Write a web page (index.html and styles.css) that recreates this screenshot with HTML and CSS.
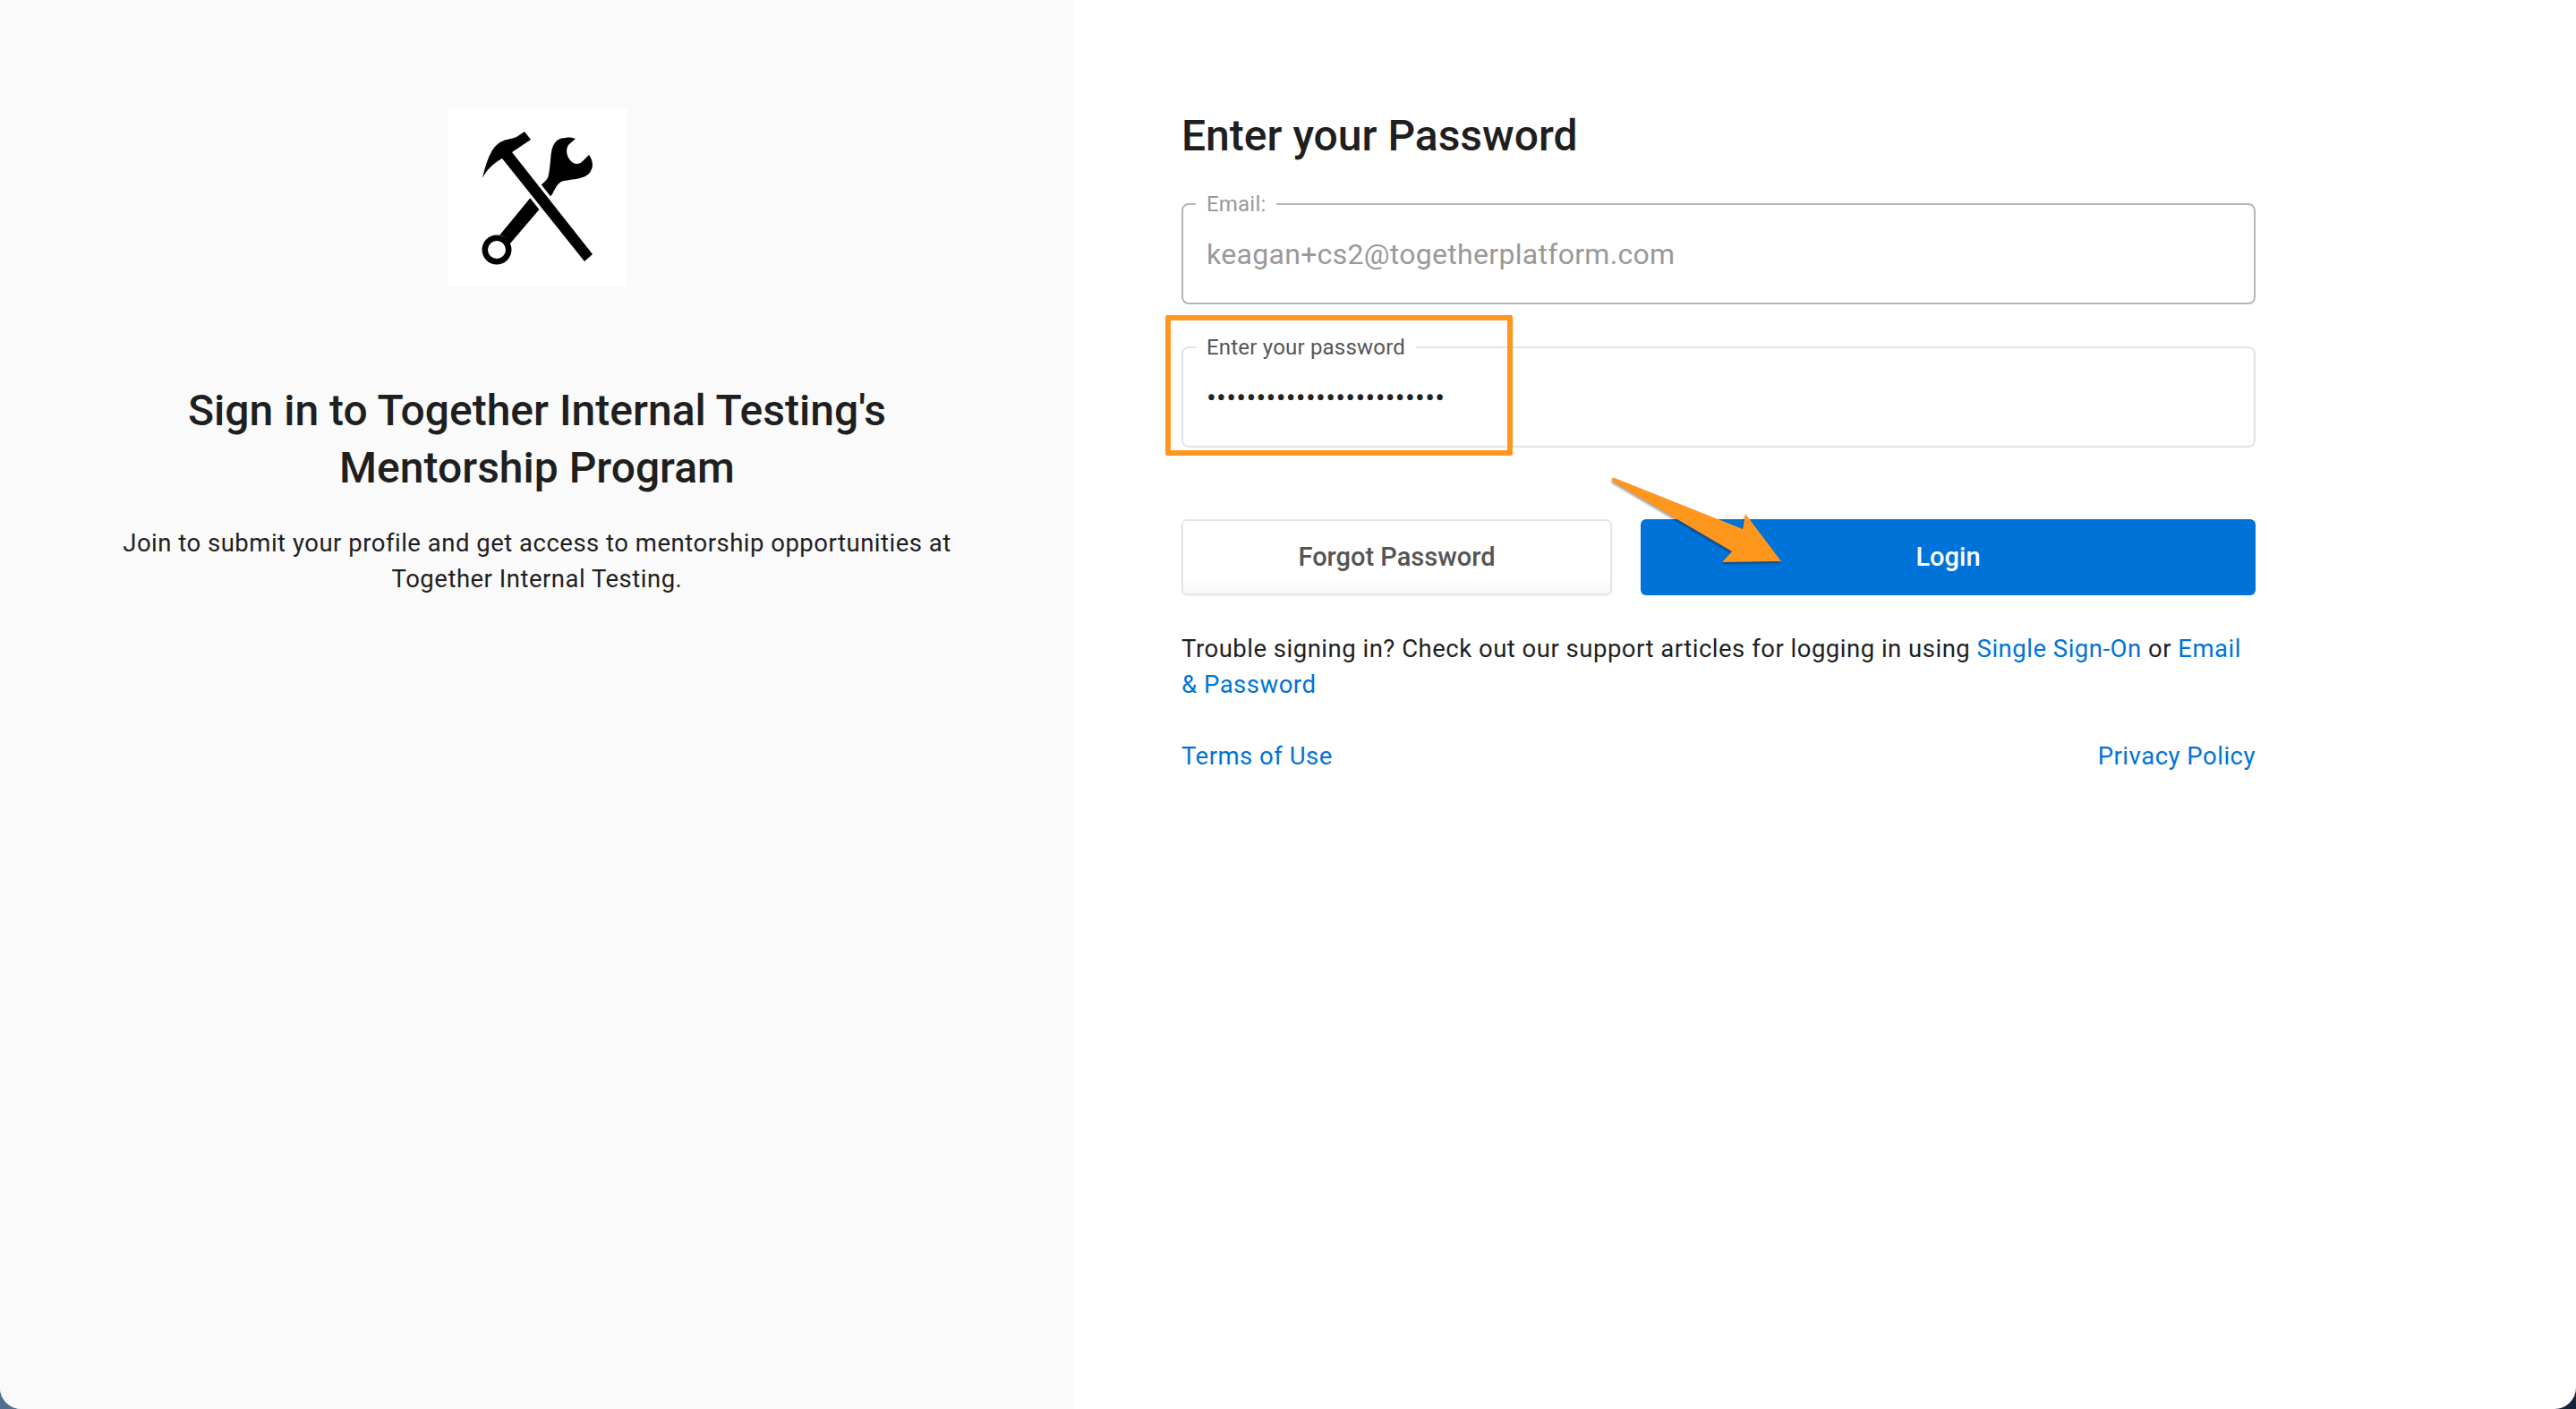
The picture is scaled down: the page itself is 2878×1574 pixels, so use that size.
FILE: index.html
```html
<!DOCTYPE html>
<html lang="en">
<head>
<meta charset="utf-8">
<title>Sign in</title>
<link rel="stylesheet" href="styles.css">
</head>
<body>
<div class="window">
  <aside class="intro">
    <div class="logo">
      <svg viewBox="0 0 200 200" width="200" height="200" aria-hidden="true">
        <path fill-rule="evenodd" d="M55 142.500A16.500 16.500 0 1 0 55 175.500A16.500 16.500 0 1 0 55 142.500ZM55 149A10 10 0 1 1 55 169A10 10 0 1 1 55 149ZM58 143L104 87C110 82 112 80 113 75C115 65 115 55 116 50C118 38 124 34 132 34C136 33 140 34 143 35L136 41C132 45 132 53 137 59C141 64 147 64 151 60L158 53C161 57 162 61 162 65C161 72 157 77 148 79C140 81 132 81 127 83C123 85 120 91 117 97L70 152C68 147 63 144 58 143Z"/>
        <path class="gap" d="M66.500 53.500L157.500 168"/>
        <path d="M39 79C42 66 47 48 56 41C63 35 70 36 77 33L86 27L93 36L72 50L162 164L153 172L61 57C52 62 44 69 39 79Z"/>
      </svg>
    </div>
    <h2 class="intro-title">Sign in to Together Internal Testing's Mentorship Program</h2>
    <p class="intro-text">Join to submit your profile and get access to mentorship opportunities at Together Internal Testing.</p>
  </aside>
  <main class="panel">
    <h1 class="panel-title">Enter your Password</h1>
    <form class="form">
      <fieldset class="field field-disabled">
        <legend>Email:</legend>
        <input class="field-input" type="text" value="keagan+cs2@togetherplatform.com" disabled>
      </fieldset>
      <fieldset class="field">
        <legend>Enter your password</legend>
        <input class="field-input" type="password" value="aaaaaaaaaaaaaaaaaaaaaaaa">
      </fieldset>
      <div class="actions">
        <button class="btn btn-secondary" type="button">Forgot Password</button>
        <button class="btn btn-primary" type="button">Login</button>
      </div>
    </form>
    <p class="help">Trouble signing in? Check out our support articles for logging in using <a href="#">Single Sign-On</a> or <a href="#">Email &amp; Password</a></p>
    <div class="legal">
      <a href="#">Terms of Use</a>
      <a href="#">Privacy Policy</a>
    </div>
  </main>
  <div class="callout-box"></div>
  <svg class="callout-arrow" viewBox="0 0 205 110" width="205" height="110" aria-hidden="true">
    <path d="M9 9L152 66L155 49L195 102L129 103L140 91L7 13C5 10 6 8 9 9Z"/>
  </svg>
</div>
</body>
</html>
```
FILE: styles.css
```css
* { box-sizing: border-box; }
html, body { height: 100%; }
body {
  margin: 0;
  background: linear-gradient(to right, #4f6f90, #16233a);
  font-family: Roboto, "Liberation Sans", sans-serif;
  color: #1f1f1f;
  overflow: hidden;
}
a { color: #0073d9; text-decoration: none; }

.window {
  position: relative;
  display: flex;
  height: 1574px;
  width: 2878px;
  background: #fff;
  border-radius: 0 0 24px 24px;
  overflow: hidden;
}

.intro {
  width: 1200px;
  flex: none;
  background: #fafafa;
  padding: 120px 120px 0;
  display: flex;
  flex-direction: column;
  align-items: center;
  text-align: center;
}
.logo { width: 200px; height: 200px; background: #fff; flex: none; }
.logo svg { display: block; }
.logo .gap { stroke: #fff; stroke-width: 19; fill: none; }
.intro-title {
  margin: 107px 0 0;
  font-size: 48px;
  line-height: 64px;
  font-weight: 500;
  width: 800px;
}
.intro-text {
  margin: 32px -10px 0;
  font-size: 27.500px;
  line-height: 40px;
  letter-spacing: 0.5px;
}

.panel {
  flex: 1;
  padding: 120px 358px 0 120px;
}
.panel-title {
  margin: 0 0 30px;
  font-size: 48px;
  line-height: 64px;
  font-weight: 500;
}
.form { display: block; }
.field {
  margin: 0 0 34px;
  padding: 0 14px;
  height: 126px;
  border: 2px solid #e2e4e7;
  border-radius: 8px;
  background: #fff;
}
.field legend {
  padding: 0 12px;
  font-size: 24px;
  line-height: 28px;
  color: #555;
  letter-spacing: 0.2px;
}
.field-disabled { border-color: #b5b5b5; }
.field-disabled legend { color: #999; }
.field-input {
  display: block;
  width: calc(100% - 12px);
  height: 84px;
  border: 0;
  padding: 0;
  margin: 0 0 0 12px;
  background: transparent;
  font: 400 32px Roboto, sans-serif;
  letter-spacing: 0.3px;
  color: #222;
  outline: none;
}
.field-input:disabled { color: #999; }

.actions {
  display: flex;
  gap: 32px;
  margin-top: 80px;
}
.btn {
  height: 85px;
  border-radius: 6px;
  font: 500 29px Roboto, sans-serif;
  padding: 0 0 2px;
}
.btn-secondary {
  width: 481px;
  flex: none;
  border: 2px solid #e3e6e9;
  background: linear-gradient(#fff 80%, #f7f8f8);
  color: #555;
  box-shadow: 0 1px 3px rgba(0,0,0,.05);
}
.btn-primary {
  flex: 1;
  border: 0;
  background: #0073d9;
  color: #fff;
}
.help {
  margin: 40px 0 0;
  font-size: 27.500px;
  line-height: 40px;
  letter-spacing: 0.5px;
}
.legal {
  display: flex;
  justify-content: space-between;
  margin-top: 40px;
  font-size: 27.500px;
  line-height: 40px;
  letter-spacing: 0.5px;
}

.callout-box {
  position: absolute;
  left: 1302px;
  top: 352px;
  width: 388px;
  height: 157px;
  border: 6px solid #ff961e;
  border-radius: 2px;
}
.callout-arrow {
  position: absolute;
  left: 1795px;
  top: 525px;
  fill: #ff961e;
  filter: drop-shadow(-1px 2px 1px rgba(0,0,0,.35));
}
```
